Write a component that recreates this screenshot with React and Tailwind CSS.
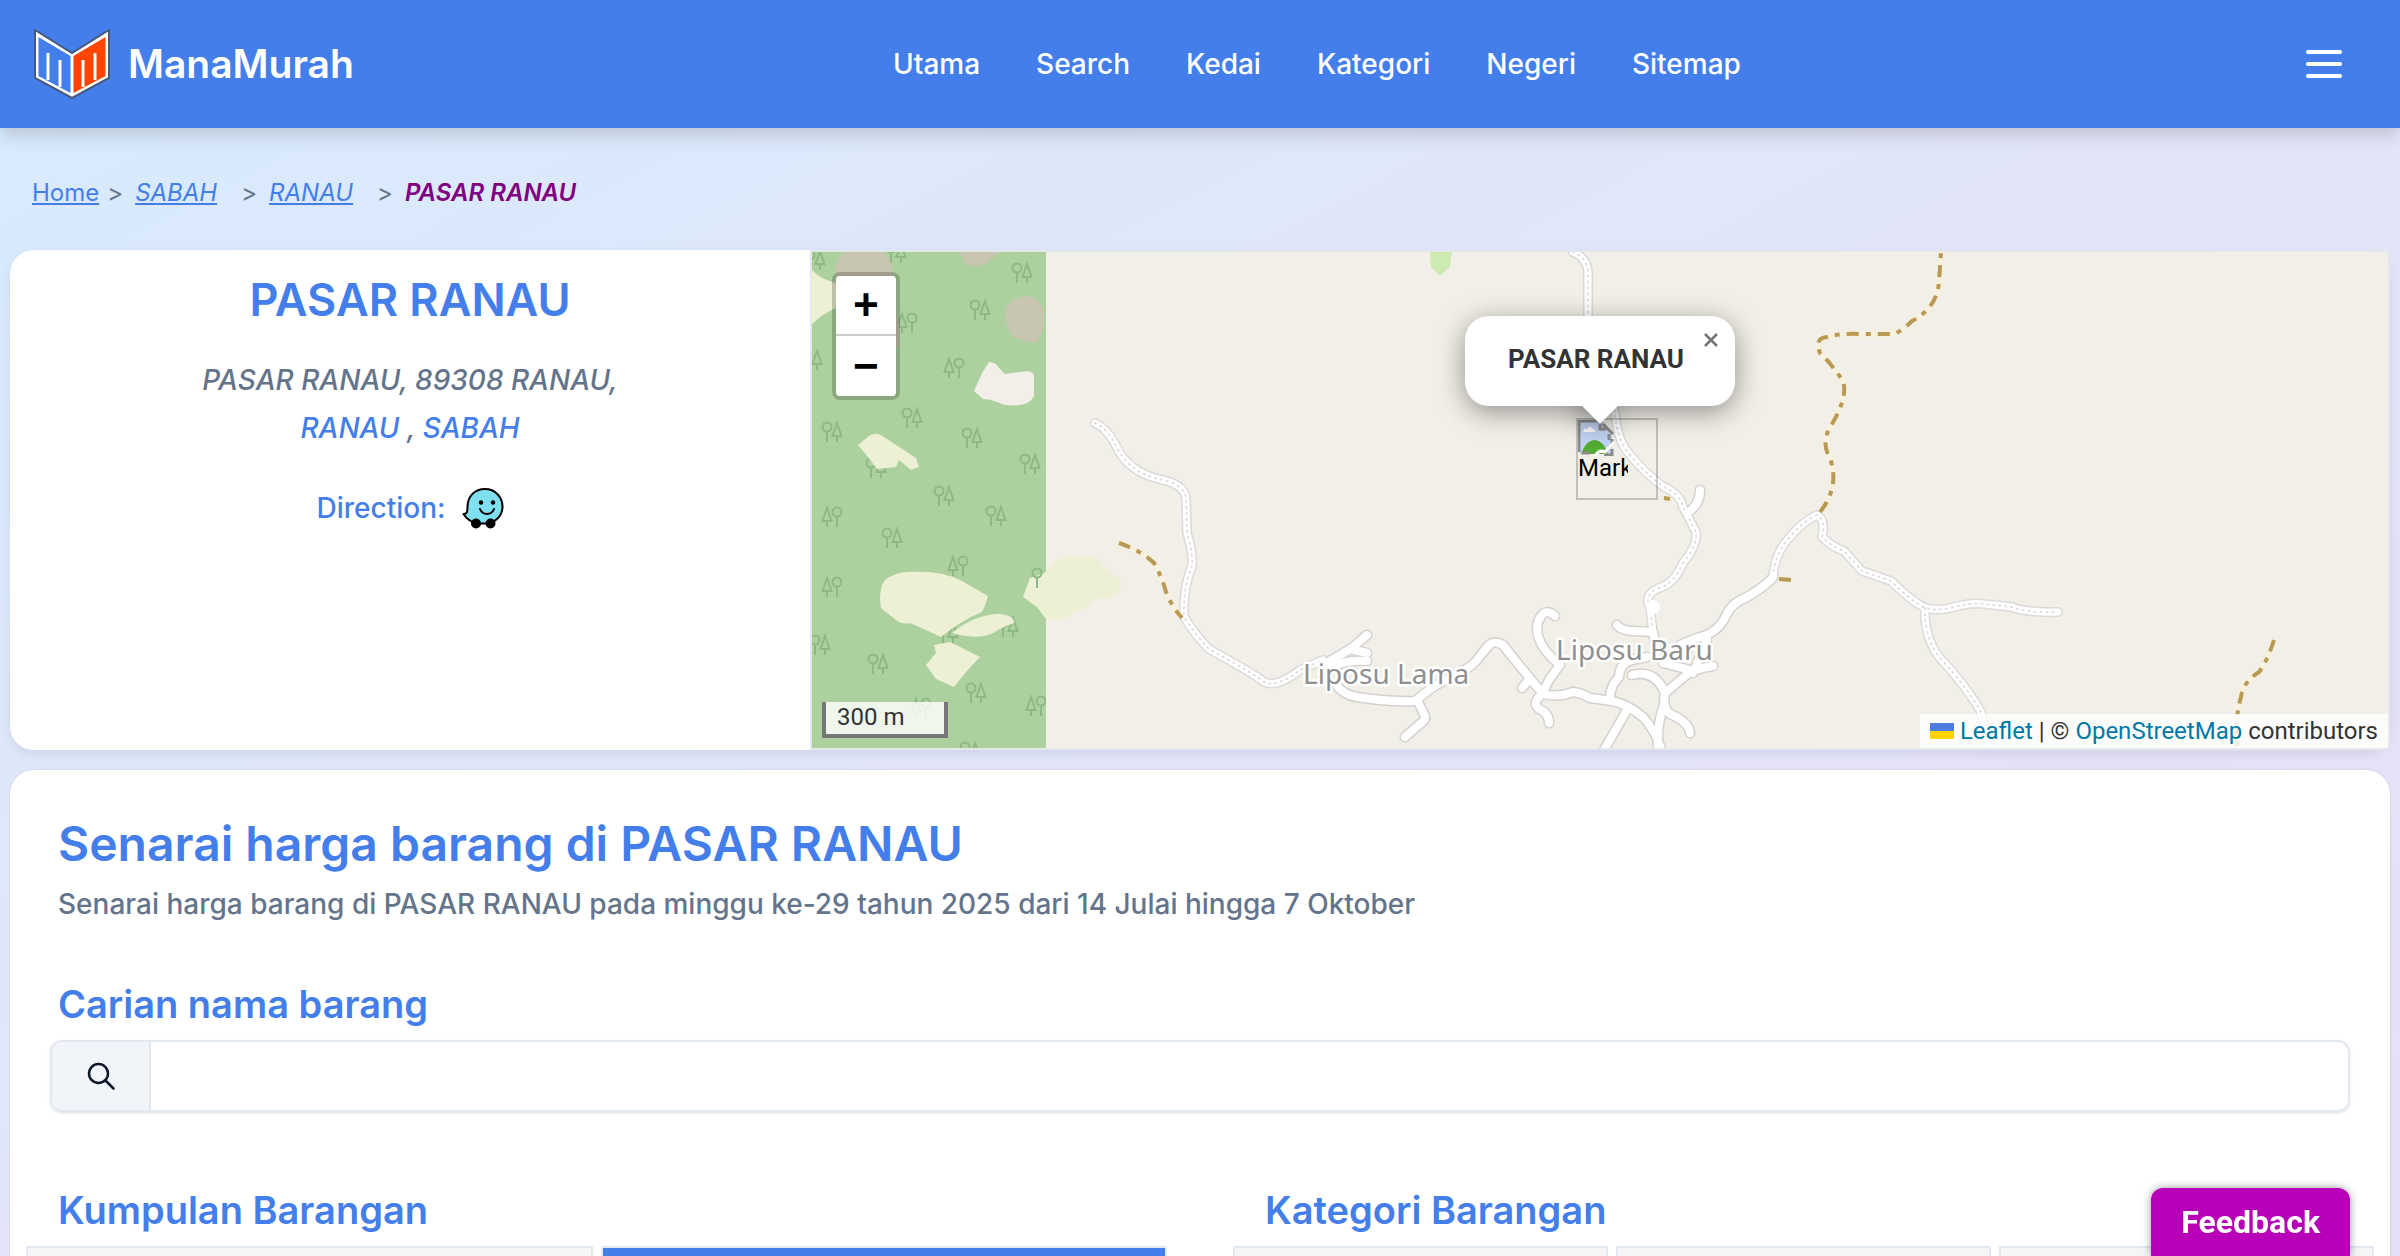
import { useState } from "react";

const navLinks = ["Utama", "Search", "Kedai", "Kategori", "Negeri", "Sitemap"];

// x, y and whether the conifer stands on the left
const trees = [
  [84, 1, false], [210, 21, false], [168, 58, false], [95, 71, true],
  [142, 116, true], [100, 166, false], [20, 180, false], [160, 186, false],
  [64, 216, false], [218, 212, false], [132, 244, false], [184, 264, false],
  [20, 265, true], [80, 286, false], [146, 314, true], [20, 335, true],
  [136, 381, false], [196, 375, false], [8, 393, false], [66, 412, false],
  [164, 441, false], [224, 454, true], [109, 456, true], [158, 500, false],
  [3, 8, false], [0, 108, false],
];

const roads = [
  "M511 413 L540 396 L555 383",
  "M538 397 L555 401",
  "M520 416 Q532 407 555 409",
  "M525 434 Q532 443 545 445 Q575 450 603 449 L621 435 L648 420 Q662 414 668 404 L677 393 Q683 388 691 393 Q705 411 731 442",
  "M605 448 L613 464 Q614 468 609 471 L593 485",
  "M710 436 L716 429",
  "M743 364 Q735 357 730 363 Q722 372 727 387 Q732 400 748 413 Q734 430 731 442 Q719 450 727 457 Q737 461 737 471",
  "M731 442 Q745 446 761 440 Q770 441 778 446 L800 449 Q816 452 832 466 Q844 480 849 497",
  "M815 458 L792 498",
  "M798 446 Q798 434 807 425 Q808 410 820 408 L835 405",
  "M820 423 Q843 417 853 441 Q850 455 858 462 Q877 470 878 481",
  "M853 441 L872 425 Q880 417 901 414",
  "M852 453 Q845 470 846 498",
  "M805 373 Q810 379 822 379 L841 380 L845 400",
  "M888 238 Q888 253 875 261",
  "M961 325 Q955 333 935 345 Q918 352 914 364 Q905 382 885 386 L868 393",
  "M895 388 L881 421",
  "M851 411 L878 418",
];

const tracks = [
  "M283 171 Q293 175 302 190 Q311 209 321 215 Q331 224 355 229 Q372 234 374 246 L375 281 Q381 300 380 314 Q371 335 372 365 Q385 385 397 397 L420 410 Q445 424 452 430 Q465 436 488 418 L511 408",
  "M761 0 Q776 6 776 22 L776 65 L793 130 L803 161 Q805 185 814 198 Q832 221 852 235 Q868 242 871 255 L884 280 Q886 293 871 311 Q862 332 847 336 Q831 343 838 355 L841 381",
  "M961 325 Q963 300 978 285 Q990 270 1005 263 Q1014 268 1010 285 Q1020 295 1032 299 Q1043 311 1050 319 L1079 329 Q1098 348 1113 356 Q1125 359 1138 356 Q1160 350 1172 352 L1200 355 Q1215 361 1246 360",
  "M1113 356 Q1112 385 1127 405 Q1155 435 1169 460 L1177 496",
];

const paths = [
  "M307 291 Q330 299 342 311 Q350 325 354 340 Q360 355 370 366",
  "M1008 260 Q1028 235 1018 206 Q1008 190 1020 172 Q1036 145 1031 129 Q1018 110 1008 101 Q1002 86 1015 85 Q1030 81 1048 82 L1079 82 Q1087 82 1100 69 Q1125 56 1127 30 L1129 0",
  "M967 327 L980 328",
  "M852 246 L858 247",
  "M1462 388 Q1455 410 1447 420 Q1431 430 1429 445 Q1422 470 1426 496",
];

function Logo() {
  return (
    <svg viewBox="0 0 76 70" className="h-[70px] w-[76px]" aria-hidden="true">
      <path d="M1 1 L38 24 L75 1 V49 L38 69 L1 49 Z" fill="#fff" stroke="#475a7d" strokeWidth="2" />
      <path d="M4.500 8 L36.500 27 V64 L4.500 47 Z" fill="#437eeb" />
      <path d="M71.500 8 L39.500 27 V64 L71.500 47 Z" fill="#ff4500" />
      <path d="M14 51 V24 M26 58 V31 M49 58 V31 M61 51 V24" stroke="#fff" strokeWidth="3" fill="none" />
    </svg>
  );
}

function WazeIcon() {
  return (
    <svg viewBox="0 0 42 42" className="h-[42px] w-[42px]" aria-hidden="true">
      <path
        d="M23 2 C33 2 40.500 10 40.500 19.500 C40.500 29 33 36.500 23 36.500 H15 C9 35 4 31 1.500 27 C5 27 5.500 25 5.500 20 C5.500 9 13 2 23 2 Z"
        fill="#7fe0f0"
        stroke="#000"
        strokeWidth="2"
        strokeLinejoin="round"
      />
      <circle cx="19" cy="15.500" r="2.200" />
      <circle cx="31" cy="15.500" r="2.200" />
      <path d="M18 22 Q20 27 25 27 Q30 27 32 22" fill="none" stroke="#000" strokeWidth="2" strokeLinecap="round" />
      <circle cx="14" cy="36.500" r="5" />
      <circle cx="28.500" cy="36.500" r="5" />
    </svg>
  );
}

function BrokenImage() {
  return (
    <svg viewBox="0 0 36 36" className="h-9 w-9" aria-hidden="true">
      <path d="M2 2 H25 L34 12 V34 H2 Z" fill="#c3d5f5" />
      <path d="M5 12 Q6 8 9 9 Q12 4 15 9 Q17 9 17 12 Z" fill="#fff" />
      <path d="M3 34 Q8 20 17 20 Q26 21 30 34 Z" fill="#54ad33" />
      <path d="M1 32 V1 H25 M22 1 V9 H28 M25 4 L35 14 M34 19 V24 M34 29 V35 H26 M4 33 H12 M31 14 V20" fill="none" stroke="#8c8c8c" strokeWidth="3" />
      <path d="M17 36 Q21 29 27 32 L36 22" fill="none" stroke="#fff" strokeWidth="3" />
    </svg>
  );
}

function MapTiles() {
  return (
    <svg viewBox="0 0 1576 496" preserveAspectRatio="xMidYMid slice" className="absolute inset-0 h-full w-full" aria-hidden="true">
      <defs>
        <clipPath id="forest">
          <rect width="234" height="496" />
        </clipPath>
        <g id="treeRound" fill="none" stroke="#8fb984" strokeWidth="2">
          <circle cx="0" cy="-5" r="4.500" />
          <path d="M0 0 V10" />
        </g>
        <g id="treeCone" fill="none" stroke="#8fb984" strokeWidth="2">
          <path d="M0 -9 L-4.500 4 H4.500 Z M0 4 V10" />
        </g>
      </defs>
      <rect width="1576" height="496" fill="#f2efe8" />
      <g clipPath="url(#forest)">
        <rect width="234" height="496" fill="#add19e" />
        {trees.map(([x, y, coneFirst], i) => (
          <g key={i} transform={`translate(${x} ${y})`}>
            <use href="#treeRound" x={coneFirst ? 5 : -5} />
            <use href="#treeCone" x={coneFirst ? -5 : 5} />
          </g>
        ))}
        <g fill="#c8c5b1">
          <path d="M23 16 Q26 3 34 0 H72 Q80 8 80 20 V40 H23 Z" />
          <path d="M148 0 H188 L174 11 Q165 17 152 11 Z" />
          <path d="M193 60 Q196 46 215 44 Q229 46 232 61 Q232 80 225 90 Q218 92 200 84 Q193 72 193 60 Z" />
          <path d="M84 60 Q90 80 86 94 L80 94 Z" />
        </g>
        <path d="M177 110 Q184 110 187 116 L193 122 L216 119 Q222 120 222 125 V144 Q218 152 208 153 Q195 155 185 150 Q178 147 171 147 L162 139 L170 121 Z" fill="#f2efe9" />
        <g fill="#eef0d5">
          <path d="M0 18 Q8 27 24 31 V56 Q10 62 0 72 Z" />
          <path d="M46 193 L57 184 Q64 179 72 185 L104 206 L107 215 L99 218 L87 208 L84 215 Q75 216 65 217 L56 205 Z" />
          <path d="M68 348 Q68 334 73 328 Q84 320 96 320 Q130 318 150 329 L176 344 Q173 355 170 360 Q150 368 129 385 Q110 376 98 371 Q90 373 84 368 L69 356 Z" />
          <path d="M140 381 Q163 362 188 362 Q203 364 202 371 Q190 375 183 380 Q168 389 140 381 Z" />
          <path d="M122 393 L138 390 L168 405 Q155 418 142 435 L124 427 L114 413 L124 401 Z" />
          <path d="M211 345 L218 326 Q228 323 234 320 V367 L225 355 Z" />
        </g>
        <use href="#treeRound" x="225" y="326" />
      </g>
      <path d="M234 318 Q247 304 261 304 Q276 301 284 306 L292 315 L309 328 L308 340 Q298 348 286 346 L272 357 L247 369 L234 366 Z" fill="#edf0d5" />
      <path d="M618 0 H640 L638 15 L628 24 L619 15 Z" fill="#cdebb0" />

      <g fill="none" strokeLinecap="round" strokeLinejoin="round">
        {tracks.map((d) => <path key={d} d={d} stroke="#dcd9d8" strokeWidth="10" />)}
        {roads.map((d) => <path key={d} d={d} stroke="#d4d1cf" strokeWidth="11" />)}
        {tracks.map((d) => <path key={d} d={d} stroke="#fff" strokeWidth="7" />)}
        {tracks.map((d) => <path key={d} d={d} stroke="#dedcdd" strokeWidth="2" strokeDasharray="1 5" />)}
        {roads.map((d) => <path key={d} d={d} stroke="#fff" strokeWidth="8" />)}
        <circle cx="841" cy="355" r="7" fill="#fff" />
      </g>
      <g fill="none" strokeLinejoin="round">
        {paths.map((d) => <path key={d} d={d} stroke="#f8f1de" strokeWidth="6" />)}
        {paths.map((d) => <path key={d} d={d} stroke="#b99a55" strokeWidth="4" strokeDasharray="12 7 5 7" />)}
      </g>

      <g fontFamily="'Noto Sans', sans-serif" fontSize="28" fontWeight="400" fill="#8f8f8f" stroke="#fff" strokeWidth="5" strokeLinejoin="round" paintOrder="stroke">
        <text x="491" y="432">Liposu Lama</text>
        <text x="744" y="408">Liposu Baru</text>
      </g>
    </svg>
  );
}

function StoreMap() {
  const [popupOpen, setPopupOpen] = useState(true);

  return (
    <div className="relative min-h-[500px] overflow-hidden border-2 border-[#e2e8ee] font-[Roboto,sans-serif] font-normal">
      <MapTiles />

      <div className="absolute left-5 top-5 flex flex-col rounded-lg border-4 border-black/20 bg-clip-padding text-black">
        <button type="button" aria-label="Zoom in" className="flex h-[60px] w-[60px] items-center justify-center rounded-t border-b-2 border-[#ccc] bg-white pt-[6px] font-['Liberation_Mono',monospace] text-[44px] leading-none font-bold">
          +
        </button>
        <button type="button" aria-label="Zoom out" className="flex h-[60px] w-[60px] items-center justify-center rounded-b bg-white pt-[6px] font-['Liberation_Mono',monospace] text-[44px] leading-none font-bold">
          −
        </button>
      </div>

      <div className="absolute top-[166px] left-1/2 -ml-6 h-[82px] w-[82px] border-2 border-black/20 text-2xl text-black">
        <BrokenImage />
        <p className="-mt-0.5 w-[50px] overflow-hidden leading-7">Marker</p>
      </div>

      {popupOpen && (
        <div className="absolute top-16 left-1/2 -translate-x-1/2">
          <div className="absolute -bottom-3 left-1/2 -ml-[14px] h-7 w-7 rotate-45 bg-white shadow-[0_6px_28px_rgba(0,0,0,0.4)]" />
          <div className="relative flex h-[90px] w-[270px] items-center rounded-3xl bg-white shadow-[0_6px_28px_rgba(0,0,0,0.4)]">
            <p className="w-full pr-2 pb-1 text-center text-[26px] font-bold text-[#333]">PASAR RANAU</p>
            <button type="button" aria-label="Close popup" onClick={() => setPopupOpen(false)} className="absolute top-0 right-0 flex h-12 w-12 items-center justify-center">
              <svg viewBox="0 0 14 14" className="h-[14px] w-[14px]">
                <path d="M1 1 L13 13 M13 1 L1 13" stroke="#757575" strokeWidth="2.500" />
              </svg>
            </button>
          </div>
          <div className="absolute -bottom-3 left-1/2 -ml-[14px] h-7 w-7 rotate-45 bg-white" />
        </div>
      )}

      <div className="absolute bottom-[10px] left-[10px] h-9 w-[126px] border-4 border-t-0 border-[#777] bg-white/80 pt-px pl-[11px] text-2xl leading-7 text-[#333]">
        300 m
      </div>

      <div className="absolute right-0 bottom-0 flex h-[34px] items-center bg-white/80 px-[10px] text-2xl text-[#333]">
        <svg viewBox="0 0 24 16" className="mr-[6px] h-4 w-6" aria-hidden="true">
          <rect width="24" height="8" fill="#4c7be1" />
          <rect y="8" width="24" height="8" fill="#ffd500" />
        </svg>
        <p>
          <a href="#leaflet" className="text-[#0078a8]">Leaflet</a> | ©{" "}
          <a href="#osm" className="text-[#0078a8]">OpenStreetMap</a> contributors
        </p>
      </div>
    </div>
  );
}

export default function App() {
  const [query, setQuery] = useState("");

  return (
    <div className="h-screen overflow-hidden bg-linear-to-br from-[#d7ebfe] via-[#e2e6f9] via-45% to-[#e8dff6] font-[Inter,sans-serif] font-medium text-[#64748b]">
      <header className="relative flex h-32 items-center justify-between bg-[#437eeb] pr-8 pl-[34px] text-white shadow-[0_8px_16px_rgba(0,0,0,0.14)]">
        <a href="#home" className="flex items-center gap-[18px]">
          <Logo />
          <span className="text-[39px] font-semibold">ManaMurah</span>
        </a>
        <nav className="flex gap-14 text-[28px]">
          {navLinks.map((link) => (
            <a key={link} href={`#${link.toLowerCase()}`}>{link}</a>
          ))}
        </nav>
        <button type="button" aria-label="Menu" className="p-5">
          <svg viewBox="0 0 24 24" className="h-12 w-12" fill="none" stroke="currentColor" strokeWidth="2" strokeLinecap="round">
            <path d="M4 6h16M4 12h16M4 18h16" />
          </svg>
        </button>
      </header>

      <nav aria-label="Breadcrumb" className="flex h-[122px] items-center px-8 pt-2 text-2xl font-normal">
        <a href="#home" className="text-[#437eeb] underline">Home</a>
        <span className="mr-3 ml-2">&gt;</span>
        <a href="#sabah" className="text-[#437eeb] italic underline">SABAH</a>
        <span className="mr-3 ml-6">&gt;</span>
        <a href="#ranau" className="text-[#437eeb] italic underline">RANAU</a>
        <span className="mr-3 ml-6">&gt;</span>
        <span className="font-semibold text-[#800080] italic">PASAR RANAU</span>
      </nav>

      <main className="flex flex-col gap-5 px-[10px]">
        <section className="grid grid-cols-[40fr_79fr] rounded-3xl shadow-[0_4px_10px_rgba(100,116,139,0.15)]">
          <div className="flex flex-col items-center rounded-l-3xl bg-white pt-[22px] text-center text-[28px]">
            <h1 className="text-[45px] leading-[56px] font-semibold text-[#437eeb]">PASAR RANAU</h1>
            <address className="mt-7 leading-[48px]">
              PASAR RANAU, 89308 RANAU,
              <br />
              <a href="#ranau" className="text-[#437eeb]">RANAU</a> ,{" "}
              <a href="#sabah" className="text-[#437eeb]">SABAH</a>
            </address>
            <a href="#direction" className="mt-8 flex items-center gap-4 leading-[48px] text-[#437eeb]">
              Direction: <WazeIcon />
            </a>
          </div>
          <StoreMap />
        </section>

        <section className="rounded-3xl bg-white px-4 pt-[42px] shadow-[0_0_2px_rgba(100,116,139,0.3)]">
          <div className="px-8">
            <h2 className="text-[48px] leading-[64px] font-semibold text-[#437eeb]">Senarai harga barang di PASAR RANAU</h2>
            <p className="mt-2 text-[28px] leading-10">
              Senarai harga barang di PASAR RANAU pada minggu ke-29 tahun 2025 dari 14 Julai hingga 7 Oktober
            </p>
            <label htmlFor="search" className="mt-[52px] block text-[38px] leading-[56px] font-semibold text-[#437eeb]">Carian nama barang</label>
          </div>

          <div className="mx-6 mt-2 flex h-[72px] overflow-hidden rounded-xl border-2 border-[#e2e8f0] shadow-sm">
            <button type="button" aria-label="Search" className="flex w-[99px] items-center justify-center border-r-2 border-[#e2e8f0] bg-[#f1f5f9] text-[#0f172a]">
              <svg viewBox="0 0 28 28" className="h-7 w-7" fill="none" stroke="currentColor" strokeWidth="2.500" strokeLinecap="round">
                <circle cx="11.500" cy="11.500" r="9.500" />
                <path d="M18.500 18.500 L26.500 26.500" />
              </svg>
            </button>
            <input id="search" type="text" value={query} onChange={(e) => setQuery(e.target.value)} className="flex-1 px-4 text-[28px] outline-none" />
          </div>

          <div className="mt-[70px] grid grid-cols-2 gap-[66px]">
            <div>
              <h3 className="px-8 text-[38px] leading-[56px] font-semibold text-[#437eeb]">Kumpulan Barangan</h3>
              <div className="mt-2 grid grid-cols-2 gap-2">
                <div className="h-20 border-2 border-[#e2e8f0] bg-[#f5f5f5]" />
                <div className="h-20 border-2 border-[#e2e8f0] bg-[#437eeb]" />
              </div>
            </div>
            <div>
              <h3 className="px-8 text-[38px] leading-[56px] font-semibold text-[#437eeb]">Kategori Barangan</h3>
              <div className="mt-2 grid grid-cols-3 gap-2">
                <div className="h-20 border-2 border-[#e2e8f0] bg-[#f5f5f5]" />
                <div className="h-20 border-2 border-[#e2e8f0] bg-[#f5f5f5]" />
                <div className="h-20 border-2 border-[#e2e8f0] bg-[#f5f5f5]" />
              </div>
            </div>
          </div>
        </section>
      </main>

      <button type="button" className="fixed right-[50px] bottom-0 h-[68px] rounded-t-xl bg-[#b700b7] px-[30px] font-[Roboto,sans-serif] text-[32px] font-bold text-white shadow-[0_0_8px_rgba(0,0,0,0.4)]">
        Feedback
      </button>
    </div>
  );
}
